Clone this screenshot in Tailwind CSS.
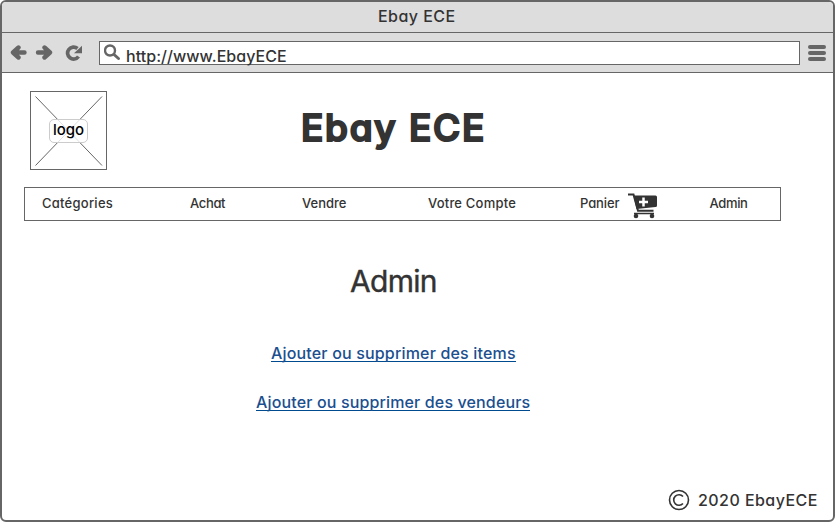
<!DOCTYPE html>
<html lang="fr">
<head>
<meta charset="utf-8">
<title>Ebay ECE</title>
<script src="https://cdn.jsdelivr.net/npm/@tailwindcss/browser@4"></script>
</head>
<body class="bg-white">
<div class="flex h-[522px] w-[835px] flex-col overflow-hidden rounded-[6px] border-2 border-[#666] bg-white font-['Inter','Noto_Sans',sans-serif] text-[#333] [font-feature-settings:'cv11','ss03'] whitespace-nowrap">
  <header class="shrink-0 bg-[#ddd]">
    <div class="flex h-[31px] items-center border-b border-[#666] pl-[376px] text-[16px] font-medium"><span class="mb-[2px] leading-[26px] tracking-[0.450px]">Ebay ECE</span></div>
    <div class="flex h-[40px] items-center border-b border-[#666] pl-2">
      <svg class="h-4 w-[18px] shrink-0" viewBox="0 0 18 16" fill="none" stroke="#666" stroke-width="4.400" stroke-linecap="round" stroke-linejoin="round"><path d="M14.500 7.500H4M8.500 2.500L3 7.500l5.500 5"/></svg>
      <svg class="ml-[7px] h-4 w-[18px] shrink-0" viewBox="0 0 18 16" fill="none" stroke="#666" stroke-width="4.400" stroke-linecap="round" stroke-linejoin="round"><path d="M3 7.500h11M9.500 2.500L15 7.500l-5.500 5"/></svg>
      <svg class="ml-3 h-4 w-[18px] shrink-0" viewBox="0 0 18 16"><path d="M13.500 11.500A6 6 0 1 1 12.500 3.500" fill="none" stroke="#666" stroke-width="3.700"/><path d="M17 .8v7.400H9z" fill="#666"/></svg>
      <div class="ml-4 flex h-6 w-[701px] items-start border border-[#666] bg-white">
        <svg class="mt-[2px] ml-1 h-[17px] w-[17px] shrink-0" viewBox="0 0 17 17" fill="none" stroke="#666"><circle cx="6" cy="6.500" r="5" stroke-width="2.400"/><path d="M10 10.500l4.500 4" stroke-width="3" stroke-linecap="round"/></svg>
        <span class="ml-[5px] text-[16px] leading-[28px] font-medium tracking-[0.050px]">http://www.EbayECE</span>
      </div>
      <svg class="ml-2 h-[18px] w-[18px] shrink-0" viewBox="0 0 18 18" fill="#666"><rect y="1" width="18" height="4" rx="2"/><rect y="7" width="18" height="4" rx="2"/><rect y="13" width="18" height="4" rx="2"/></svg>
    </div>
  </header>
  <main class="flex grow flex-col">
    <div class="flex pt-[18px] pl-7">
      <div class="grid h-[79px] w-[77px] place-items-center border border-[#666]">
        <svg class="col-start-1 row-start-1 h-[77px] w-[75px]" viewBox="0 0 75 77" stroke="#666" stroke-width="1"><path d="M4.500 4.500l66.500 69M71 4.500l-66.500 69"/></svg>
        <span class="col-start-1 row-start-1 flex h-6 w-[39px] items-center justify-center rounded-[5px] border border-[#ccc] bg-white/80 text-[15px] font-medium text-black">logo</span>
      </div>
      <h1 class="ml-[194px] pt-[13px] text-[37px] leading-[48px] font-medium tracking-[1.750px] [-webkit-text-stroke:2.200px_#333] [stroke-linejoin:round]">Ebay ECE</h1>
    </div>
    <nav class="mt-[17px] ml-[22px] flex h-[34px] w-[757px] items-center border border-[#666] pl-[17px] text-[13px] leading-[20px] font-medium">
      <a class="mb-[2px] w-[148px] tracking-[0.250px]">Catégories</a>
      <a class="mb-[2px] w-[112px] tracking-[-0.350px]">Achat</a>
      <a class="mb-[2px] w-[126px]">Vendre</a>
      <a class="mb-[2px] w-[152px] tracking-[0.200px]">Votre Compte</a>
      <a class="flex w-[129.500px] items-center">
        <span class="mb-[2px] w-[47px] tracking-[-0.100px]">Panier</span>
        <svg class="mt-[3px] h-[26px] w-[31px]" viewBox="0 0 31 26" fill="#333"><path d="M1 1.500h5.500l4.500 16.300h15.500" fill="none" stroke="#333" stroke-width="2"/><path d="M6.500 2.500L28.500 2.500Q30 2.500 30 4v8.500Q30 14 28.500 14L9.500 16z"/><path d="M16.500 4.500v9M12 9h9" stroke="#fff" stroke-width="2.500"/><path d="M7 20.500h20" stroke="#333" stroke-width="1.300"/><circle cx="9" cy="23" r="2.300"/><circle cx="25" cy="23" r="2.300"/></svg>
      </a>
      <a class="mb-[2px] tracking-[-0.350px]">Admin</a>
    </nav>
    <h2 class="mt-[42px] ml-[348px] text-[30px] leading-9 tracking-[-0.700px] [-webkit-text-stroke:0.400px_#333]">Admin</h2>
    <a class="mt-[45px] ml-[269px] h-[18px] w-[245px] border-b border-[#004b8f] text-[16px] leading-[18px] font-[450] tracking-[0.170px] text-[#1b4f8f]">Ajouter ou supprimer des items</a>
    <a class="mt-[31px] ml-[254px] h-[18px] w-[274px] border-b border-[#004b8f] text-[16px] leading-[18px] font-[450] tracking-[0.140px] text-[#1b4f8f]">Ajouter ou supprimer des vendeurs</a>
    <footer class="mt-[78px] ml-[666px] flex items-center">
      <svg class="h-[22px] w-[22px]" viewBox="0 0 22 22" fill="none" stroke="#333" stroke-width="1.600"><circle cx="11" cy="11" r="9.500"/><path d="M15 7.500a5.300 5.300 0 1 0 0 7"/></svg>
      <span class="ml-2 text-[16px] leading-[22px] font-medium tracking-[0.450px]">2020 EbayECE</span>
    </footer>
  </main>
</div>
</body>
</html>
